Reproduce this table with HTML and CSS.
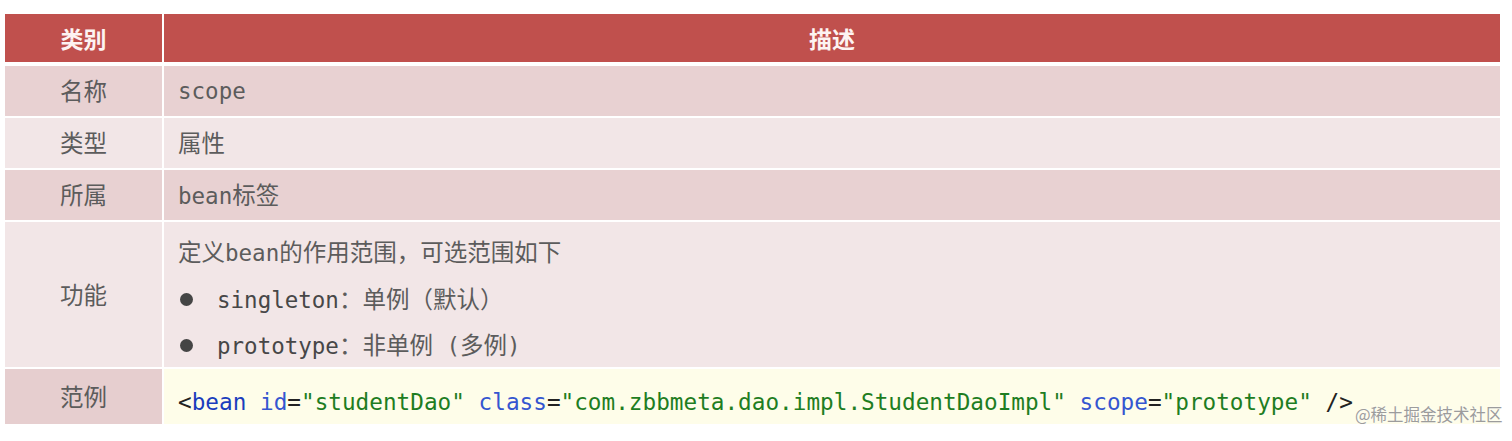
FILE: index.html
```html
<!DOCTYPE html>
<html lang="zh-CN">
<head>
<meta charset="utf-8">
<title>bean scope</title>
<link rel="stylesheet" href="styles.css">
</head>
<body>
<div class="page">
  <div class="table">
    <div class="row head">
      <div class="cell key">类别</div>
      <div class="cell val center">描述</div>
    </div>
    <div class="row odd first">
      <div class="cell key">名称</div>
      <div class="cell val"><span class="mono">scope</span></div>
    </div>
    <div class="row even">
      <div class="cell key">类型</div>
      <div class="cell val">属性</div>
    </div>
    <div class="row odd">
      <div class="cell key">所属</div>
      <div class="cell val"><span><span class="mono">bean</span>标签</span></div>
    </div>
    <div class="row even tall">
      <div class="cell key">功能</div>
      <div class="cell val list">
        <div class="line">定义<span class="mono">bean</span>的作用范围，可选范围如下</div>
        <div class="line item"><span class="dot"></span><span class="mono dark">singleton</span>：单例（默认）</div>
        <div class="line item"><span class="dot"></span><span class="mono dark">prototype</span>：非单例<span class="mono"> (</span>多例<span class="mono">)</span></div>
      </div>
    </div>
    <div class="row code-row">
      <div class="cell key">范例</div>
      <div class="cell val code"><code class="src"><span class="pun">&lt;</span><span class="tag">bean</span> <span class="att">id</span><span class="pun">=</span><span class="str">"studentDao"</span> <span class="att">class</span><span class="pun">=</span><span class="str">"com.zbbmeta.dao.impl.StudentDaoImpl"</span> <span class="att">scope</span><span class="pun">=</span><span class="str">"prototype"</span> <span class="pun">/&gt;</span></code></div>
    </div>
  </div>
  <div class="watermark">@稀土掘金技术社区</div>
</div>
</body>
</html>
```
FILE: styles.css
```css
* { box-sizing: border-box; }
html, body { margin: 0; padding: 0; background: #ffffff; }
body {
  width: 1512px;
  height: 441px;
  overflow: hidden;
  font-family: "Noto Sans CJK SC", "Noto Sans", sans-serif;
}
.page {
  position: relative;
  width: 1512px;
  height: 441px;
  padding: 14px 0 0 5px;
}
.table {
  display: flex;
  flex-direction: column;
  gap: 2px;
  width: 1495px;
}
.row {
  display: grid;
  grid-template-columns: 157px 1336px;
  column-gap: 2px;
  height: 50px;
}
.cell {
  display: flex;
  align-items: center;
  font-size: 23.5px;
  color: #5c5c5c;
  line-height: 1;
}
.key { justify-content: center; }
.val { padding-left: 14px; }
.val.center { justify-content: center; padding-left: 0; }

.head { height: 48px; }
.head .cell {
  background: #c0504d;
  color: #fdf3f2;
  font-weight: 700;
  font-size: 23px;
}
.first { margin-top: 2px; }
.odd .cell { background: #e8d1d2; }
.even .cell { background: #f2e6e7; }

.tall { height: 145px; }
.list {
  flex-direction: column;
  align-items: flex-start;
  justify-content: center;
  gap: 22px;
  padding-top: 9px;
}
.line { display: block; white-space: pre; }
.item { padding-left: 2px; }
.dot {
  display: inline-block;
  width: 13px;
  height: 13px;
  border-radius: 50%;
  background: #454545;
  margin-right: 24px;
  vertical-align: 2px;
}
.mono {
  font-family: "DejaVu Sans Mono", "Liberation Mono", monospace;
  font-size: 22.5px;
}
.dark { color: #474747; }

.code-row { height: 55px; }
.code-row .key { background: #e6cecf; }
.code-row .val {
  background: #fefde9;
  padding-top: 12px;
}
.src {
  font-family: "DejaVu Sans Mono", "Liberation Mono", monospace;
  font-size: 22.7px;
  white-space: pre;
  color: #222222;
}
.tag { color: #1a3dbd; }
.att { color: #3556d0; }
.str { color: #1e7d22; }
.pun { color: #222222; }

.watermark {
  position: absolute;
  left: 1355px;
  top: 406px;
  font-size: 16.5px;
  color: #9c9c9c;
  line-height: 1;
  text-shadow: 0 0 2px #ffffff;
}
```
